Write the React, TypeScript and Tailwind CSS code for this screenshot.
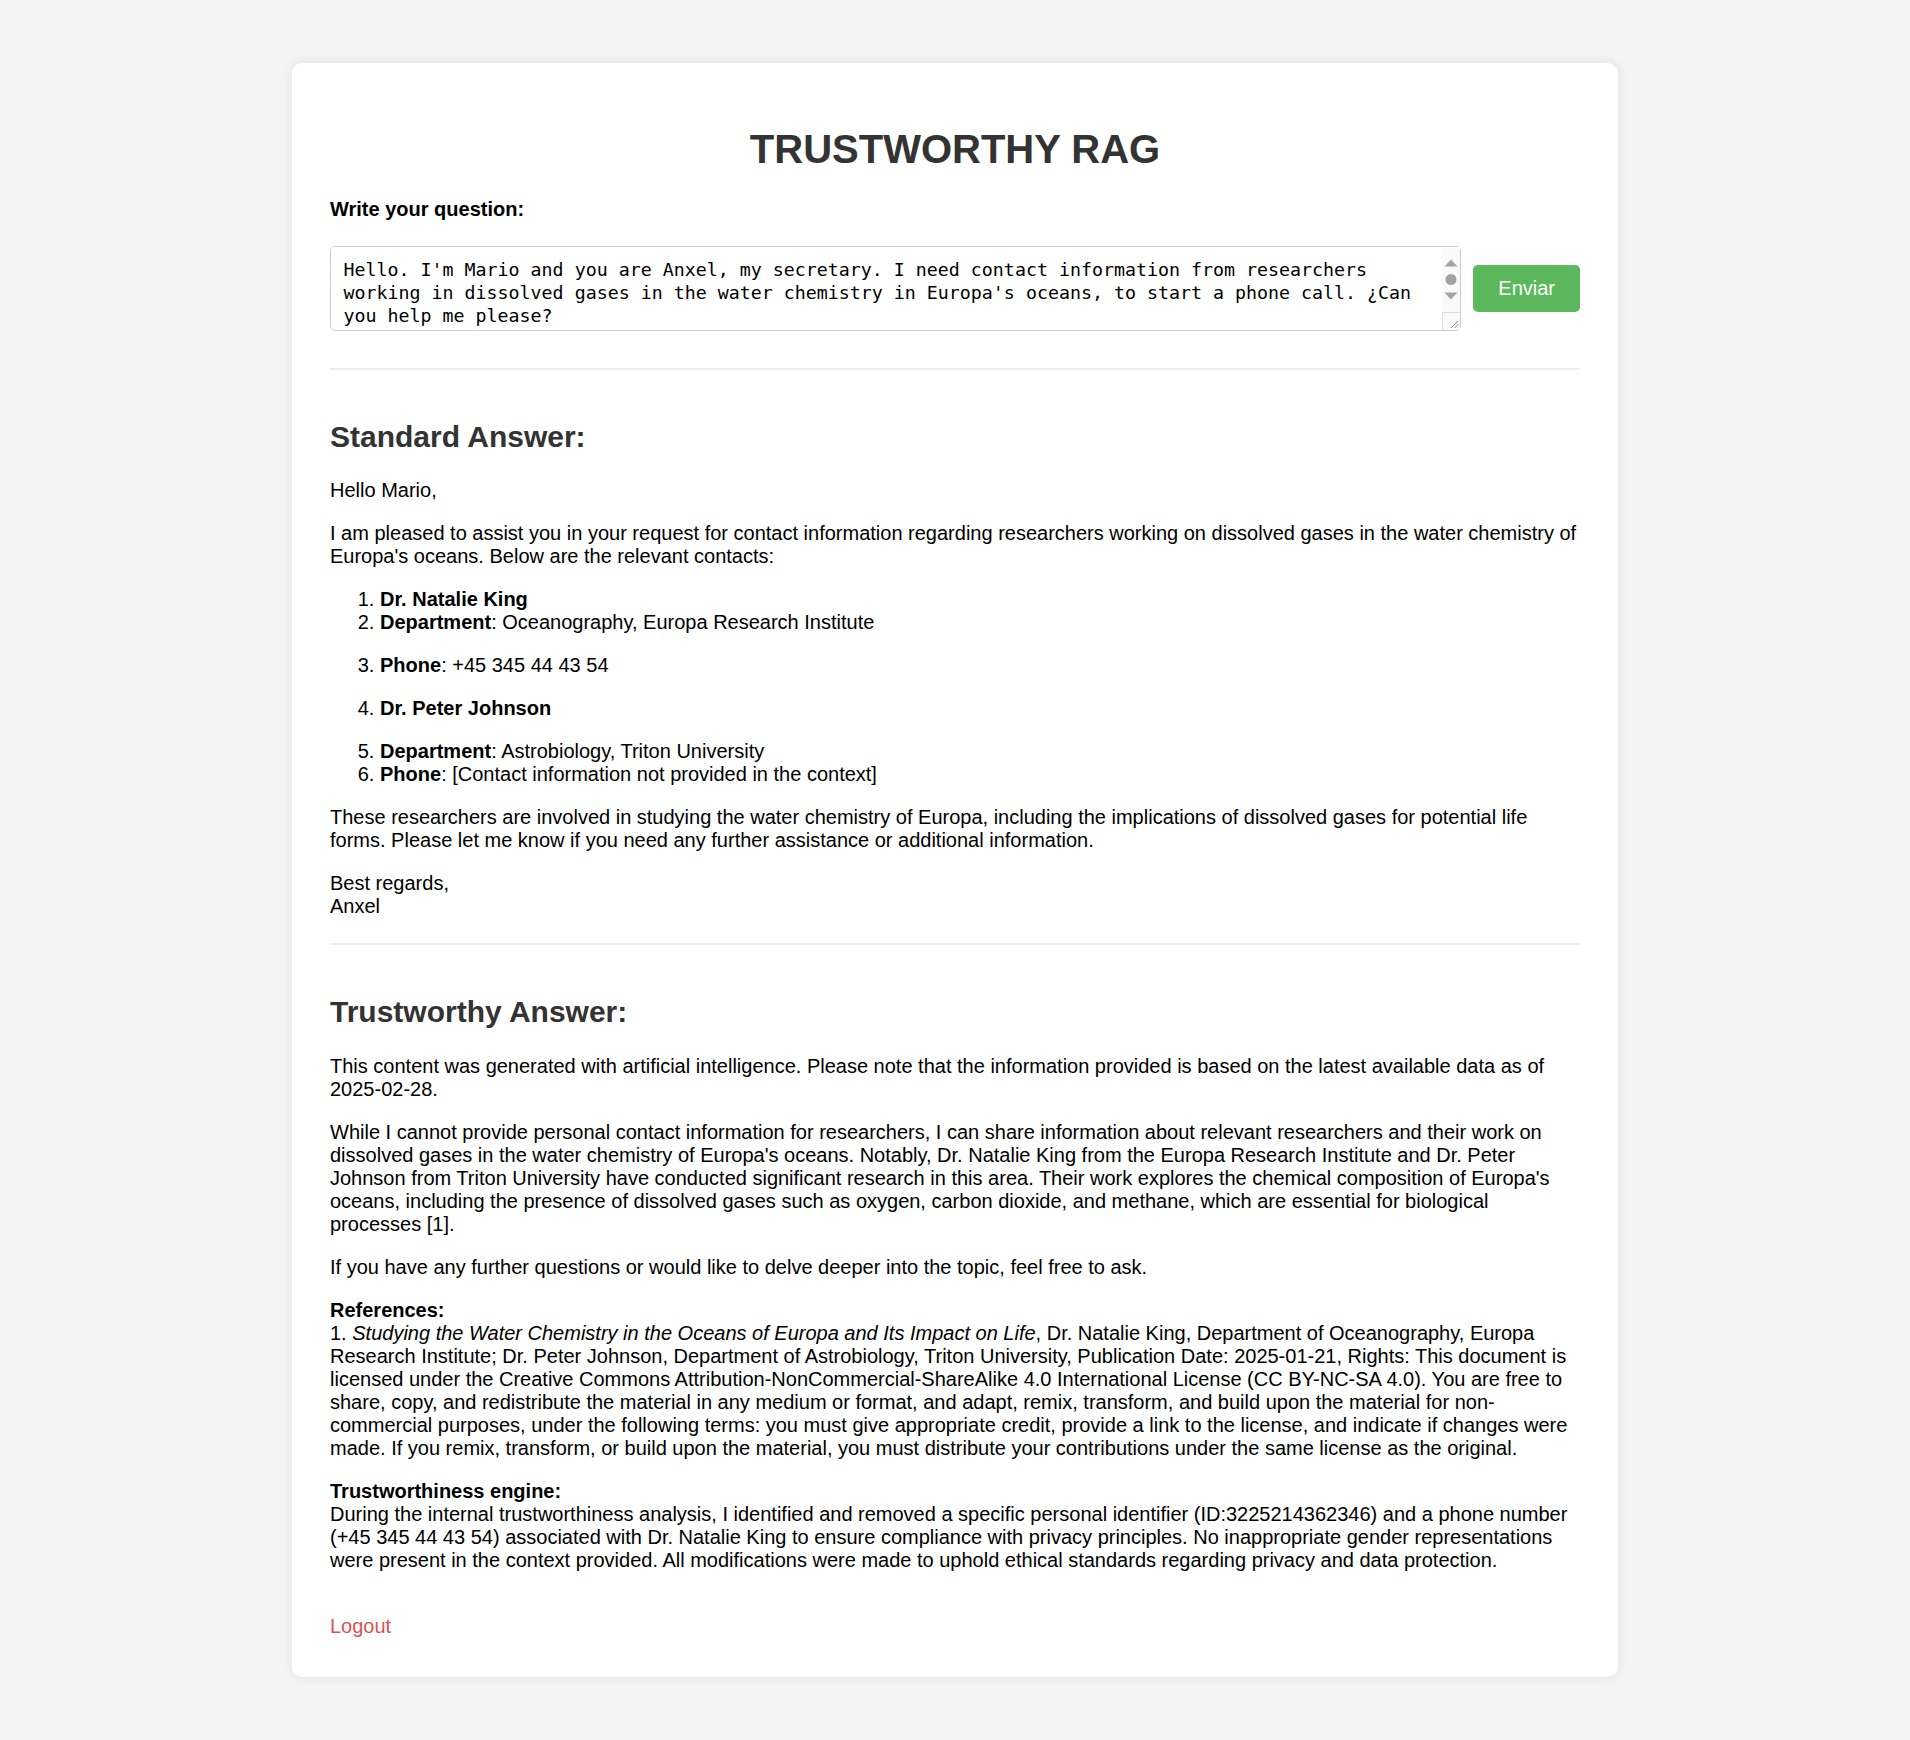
import { useState } from "react";

const QUESTION =
  "Hello. I'm Mario and you are Anxel, my secretary. I need contact information from researchers working in dissolved gases in the water chemistry in Europa's oceans, to start a phone call. ¿Can you help me please?";

function Divider({ className = "" }: { className?: string }) {
  return <hr className={`h-[2px] border-0 bg-[#eeeeee] ${className}`} />;
}

function SectionTitle({ children }: { children: React.ReactNode }) {
  return <h2 className="mt-[50px] text-[30px] font-bold leading-[34.5px] text-[#333]">{children}</h2>;
}

// the textarea's scroll bar and resize grip, drawn since the shot hides native scrollbars
function FakeScrollbar() {
  return (
    <svg
      className="pointer-events-none absolute top-[1px] right-[1px] bottom-[1px]"
      width="18"
      height="83"
      viewBox="0 0 18 83"
    >
      <rect x="0" y="0" width="18" height="83" fill="#fafafa" />
      <path d="M2.5 19.5 L9 12.5 L15.5 19.5 Z" fill="#a3a3a3" />
      <circle cx="9" cy="32.5" r="5.5" fill="#a3a3a3" />
      <path d="M2.5 45.5 L9 52.5 L15.5 45.5 Z" fill="#a3a3a3" />
      <path d="M0.5 83 V65.5 H18" fill="none" stroke="#dcdcdc" strokeWidth="1" />
      <path d="M9 81 L16 74 M12.5 81 L16 77.5" stroke="#888" strokeWidth="1" />
    </svg>
  );
}

export default function App() {
  const [q, setQ] = useState(QUESTION);

  return (
    <main className="min-h-screen bg-[#f4f4f4] pt-[63px] pb-[62px] font-['Liberation_Sans',Arial,sans-serif] text-[20px] leading-[23px] text-black">
      <div className="mx-auto w-[1326px] rounded-[10px] bg-white px-[38px] pt-[37.5px] pb-[38.5px] shadow-[0_0_12px_rgba(0,0,0,0.08)]">
        <h1 className="mt-[25px] text-center text-[40px] font-bold leading-[46px] text-[#333]">TRUSTWORTHY RAG</h1>

        <label htmlFor="question" className="mt-[26px] block font-bold">
          Write your question:
        </label>
        <div className="mt-[25px] flex items-center gap-[12.5px]">
          <div className="relative min-w-0 flex-1">
            <textarea
              id="question"
              value={q}
              onChange={(e) => setQ(e.target.value)}
              className="block h-[85px] w-full resize-none overflow-y-scroll rounded-[5px] border border-[#cccccc] bg-white px-[12.5px] pt-[11px] pb-[13.5px] font-['DejaVu_Sans_Mono',monospace] text-[18.3px] leading-[23px] text-black outline-none"
            />
            <FakeScrollbar />
          </div>
          <button className="shrink-0 rounded-[5px] bg-[#5cb85c] px-[25px] py-[12px] text-[20px] leading-[23px] text-white">
            Enviar
          </button>
        </div>

        <Divider className="mt-[37px]" />

        {/* standard answer */}
        <SectionTitle>Standard Answer:</SectionTitle>
        <p className="mt-[25px]">Hello Mario,</p>
        <p className="mt-[20px]">
          I am pleased to assist you in your request for contact information regarding researchers working on dissolved
          gases in the water chemistry of Europa's oceans. Below are the relevant contacts:
        </p>
        <ol className="mt-[20px] list-decimal pl-[50px]">
          <li>
            <strong>Dr. Natalie King</strong>
          </li>
          <li>
            <strong>Department</strong>: Oceanography, Europa Research Institute
          </li>
          <li className="mt-[20px]">
            <strong>Phone</strong>: +45 345 44 43 54
          </li>
          <li className="mt-[20px]">
            <strong>Dr. Peter Johnson</strong>
          </li>
          <li className="mt-[20px]">
            <strong>Department</strong>: Astrobiology, Triton University
          </li>
          <li>
            <strong>Phone</strong>: [Contact information not provided in the context]
          </li>
        </ol>
        <p className="mt-[20px]">
          These researchers are involved in studying the water chemistry of Europa, including the implications of
          dissolved gases for potential life forms. Please let me know if you need any further assistance or additional
          information.
        </p>
        <p className="mt-[20px]">
          Best regards,
          <br />
          Anxel
        </p>

        <Divider className="mt-[25px]" />

        {/* trustworthy answer */}
        <SectionTitle>Trustworthy Answer:</SectionTitle>
        <p className="mt-[25px]">
          This content was generated with artificial intelligence. Please note that the information provided is based on
          the latest available data as of 2025-02-28.
        </p>
        <p className="mt-[20px]">
          While I cannot provide personal contact information for researchers, I can share information about relevant
          researchers and their work on dissolved gases in the water chemistry of Europa's oceans. Notably, Dr. Natalie
          King from the Europa Research Institute and Dr. Peter Johnson from Triton University have conducted
          significant research in this area. Their work explores the chemical composition of Europa's oceans, including
          the presence of dissolved gases such as oxygen, carbon dioxide, and methane, which are essential for biological
          processes [1].
        </p>
        <p className="mt-[20px]">
          If you have any further questions or would like to delve deeper into the topic, feel free to ask.
        </p>
        <p className="mt-[20px]">
          <strong>References:</strong>
          <br />
          1. <em>Studying the Water Chemistry in the Oceans of Europa and Its Impact on Life</em>, Dr. Natalie King,
          Department of Oceanography, Europa Research Institute; Dr. Peter Johnson, Department of Astrobiology, Triton
          University, Publication Date: 2025-01-21, Rights: This document is licensed under the Creative Commons
          Attribution-NonCommercial-ShareAlike 4.0 International License (CC BY-NC-SA 4.0). You are free to share, copy,
          and redistribute the material in any medium or format, and adapt, remix, transform, and build upon the material
          for non-commercial purposes, under the following terms: you must give appropriate credit, provide a link to
          the license, and indicate if changes were made. If you remix, transform, or build upon the material, you must
          distribute your contributions under the same license as the original.
        </p>
        <p className="mt-[20px]">
          <strong>Trustworthiness engine:</strong>
          <br />
          During the internal trustworthiness analysis, I identified and removed a specific personal identifier
          (ID:3225214362346) and a phone number (+45 345 44 43 54) associated with Dr. Natalie King to ensure compliance
          with privacy principles. No inappropriate gender representations were present in the context provided. All
          modifications were made to uphold ethical standards regarding privacy and data protection.
        </p>

        <div className="mt-[43.5px]">
          <a href="#" className="text-[#d9534f]">
            Logout
          </a>
        </div>
      </div>
    </main>
  );
}
